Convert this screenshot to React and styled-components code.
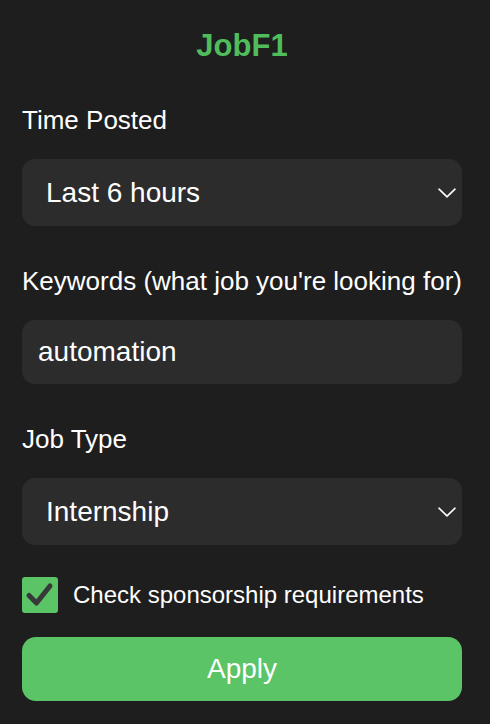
import React, { useState } from 'react';
import styled, { createGlobalStyle } from 'styled-components';

const GlobalStyle = createGlobalStyle`
  html, body {
    margin: 0;
    padding: 0;
    background-color: #1e1e1e;
  }
  body {
    font-family: "Liberation Sans", Arial, Helvetica, sans-serif;
    color: #fff;
  }
`;

const Popup = styled.div`
  width: 490px;
  min-height: 724px;
  box-sizing: border-box;
  padding: 28px 28px 23px 22px;
  display: flex;
  flex-direction: column;
  background-color: #1e1e1e;
`;

const Title = styled.h1`
  margin: 0 0 41px;
  font-size: 31px;
  line-height: 36px;
  font-weight: 700;
  color: #4fbd5c;
  text-align: center;
`;

const Field = styled.div`
  display: flex;
  flex-direction: column;
  gap: 24px;
  margin-bottom: ${(props) => props.spacing || 40}px;
`;

const Label = styled.label`
  font-size: 26px;
  line-height: 30px;
  color: #fff;
  white-space: nowrap;
`;

const SelectWrap = styled.div`
  position: relative;
  height: 67px;
`;

const Select = styled.select`
  appearance: none;
  -webkit-appearance: none;
  width: 100%;
  height: 100%;
  box-sizing: border-box;
  border: none;
  outline: none;
  border-radius: 13px;
  background-color: #2c2c2c;
  color: #fff;
  font-family: inherit;
  font-size: 28px;
  padding: 0 40px 0 24px;
`;

const Chevron = styled.svg`
  position: absolute;
  right: 6px;
  top: 50%;
  transform: translateY(-50%);
  width: 18px;
  height: 10px;
  pointer-events: none;
`;

const Input = styled.input`
  height: 64px;
  box-sizing: border-box;
  border: none;
  outline: none;
  border-radius: 13px;
  background-color: #2c2c2c;
  color: #fff;
  font-family: inherit;
  font-size: 28px;
  padding: 0 16px;
`;

const CheckRow = styled.label`
  display: flex;
  align-items: center;
  gap: 15px;
  margin-bottom: 24px;
  cursor: pointer;
`;

const CheckBox = styled.span`
  width: 36px;
  height: 36px;
  border-radius: 3px;
  background-color: ${(props) => (props.checked ? '#5ac466' : '#2c2c2c')};
  display: flex;
  align-items: center;
  justify-content: center;
  flex-shrink: 0;
`;

const CheckText = styled.span`
  font-size: 24px;
  line-height: 28px;
  color: #fff;
`;

const ApplyButton = styled.button`
  height: 64px;
  border: none;
  border-radius: 14px;
  background-color: #5ac466;
  color: #fff;
  font-family: inherit;
  font-size: 28px;
  cursor: pointer;
`;

function ChevronIcon() {
  return (
    <Chevron viewBox="0 0 18 10" fill="none">
      <path d="M1 1.2 L9 8.8 L17 1.2" stroke="#fff" strokeWidth="1.6" strokeLinecap="round" strokeLinejoin="round" />
    </Chevron>
  );
}

export default function App() {
  const [time, setTime] = useState('6h');
  const [keywords, setKeywords] = useState('automation');
  const [jobType, setJobType] = useState('internship');
  const [sponsorship, setSponsorship] = useState(true);

  return (
    <>
      <GlobalStyle />
      <Popup>
        <Title>JobF1</Title>

        <Field>
          <Label>Time Posted</Label>
          <SelectWrap>
            <Select value={time} onChange={(e) => setTime(e.target.value)}>
              <option value="1h">Last hour</option>
              <option value="6h">Last 6 hours</option>
              <option value="24h">Last 24 hours</option>
              <option value="week">Last week</option>
            </Select>
            <ChevronIcon />
          </SelectWrap>
        </Field>

        <Field>
          <Label>Keywords (what job you're looking for)</Label>
          <Input value={keywords} onChange={(e) => setKeywords(e.target.value)} />
        </Field>

        <Field spacing={32}>
          <Label>Job Type</Label>
          <SelectWrap>
            <Select value={jobType} onChange={(e) => setJobType(e.target.value)}>
              <option value="internship">Internship</option>
              <option value="fulltime">Full-time</option>
              <option value="parttime">Part-time</option>
            </Select>
            <ChevronIcon />
          </SelectWrap>
        </Field>

        <CheckRow onClick={() => setSponsorship(!sponsorship)}>
          <CheckBox checked={sponsorship}>
            {sponsorship && (
              <svg width="36" height="36" viewBox="0 0 36 36">
                <path d="M7 18.5 L14.5 26 L28 9" stroke="#383838" strokeWidth="5" fill="none" strokeLinecap="round" strokeLinejoin="round" />
              </svg>
            )}
          </CheckBox>
          <CheckText>Check sponsorship requirements</CheckText>
        </CheckRow>

        <ApplyButton>Apply</ApplyButton>
      </Popup>
    </>
  );
}
